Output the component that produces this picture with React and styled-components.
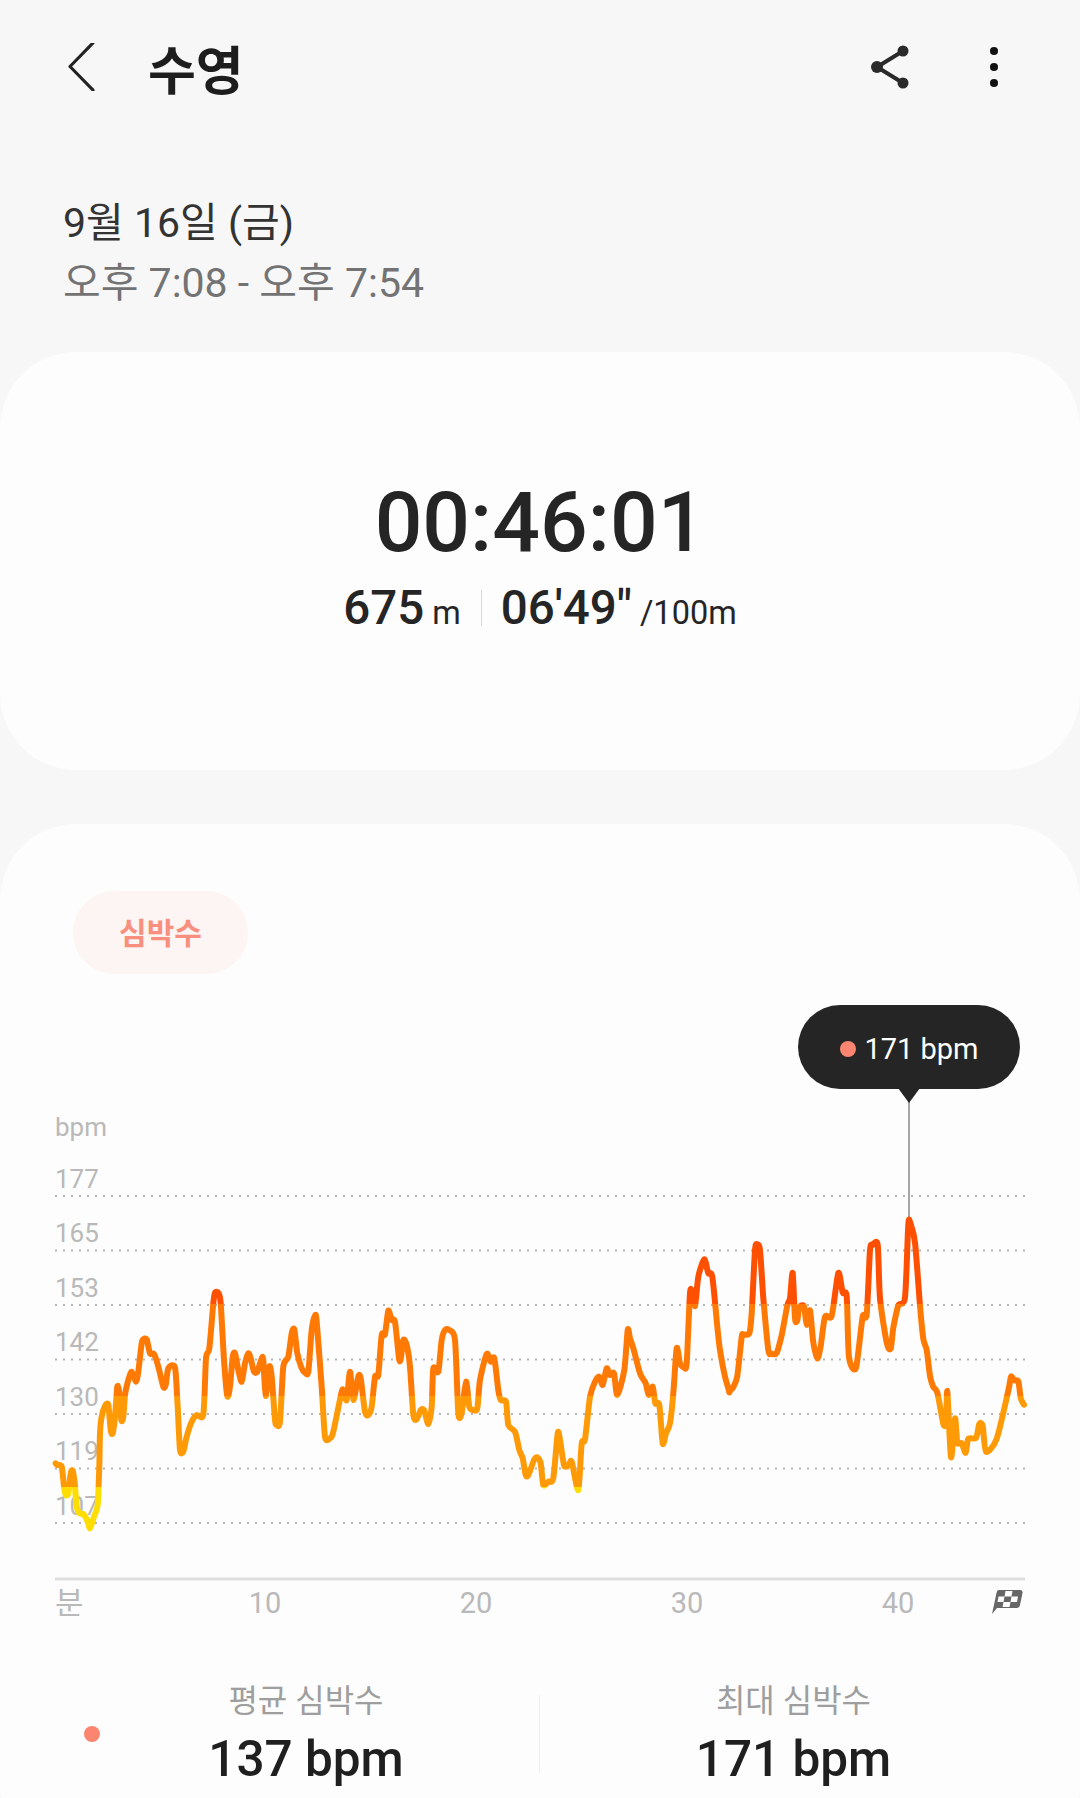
import React from "react";
import styled, { createGlobalStyle } from "styled-components";

const GlobalStyle = createGlobalStyle`
  html, body {
    margin: 0;
    padding: 0;
    background: #f7f7f7;
  }
  body {
    font-family: Roboto, "Noto Sans CJK KR", sans-serif;
  }
`;

const Page = styled.div`
  width: 1080px;
  height: 1798px;
  overflow: hidden;
  background: #f7f7f7;
`;

const Header = styled.header`
  display: flex;
  align-items: center;
  height: 134px;
  padding: 0 62px 0 64px;
`;

const HeaderIcon = styled.svg`
  display: block;
  width: 48px;
  height: 48px;
  flex: none;
`;

const Title = styled.h1`
  margin: 0 0 0 36px;
  flex: 1;
  font-size: 52px;
  font-weight: 700;
  color: #1d1d1d;
`;

const Actions = styled.div`
  display: flex;
  gap: 56px;
`;

const DateBlock = styled.div`
  height: 218px;
  padding: 59px 0 0 63px;
  box-sizing: border-box;
`;

const DateLine = styled.div`
  font-size: 41px;
  line-height: 60px;
  color: ${(p) => (p.$muted ? "#737373" : "#333")};
`;

const Card = styled.section`
  background: #fdfdfd;
  border-radius: 76px;
`;

const SummaryCard = styled(Card)`
  height: 418px;
  padding-top: 126px;
  box-sizing: border-box;
  display: flex;
  flex-direction: column;
  align-items: center;
`;

const Timer = styled.div`
  font-size: 84px;
  line-height: 90px;
  font-weight: 500;
  color: #252525;
`;

const Metrics = styled.div`
  display: flex;
  align-items: baseline;
  margin-top: 12px;
  color: #252525;
`;

const MetricValue = styled.span`
  font-size: 47.5px;
  font-weight: 500;
`;

const MetricUnit = styled.span`
  margin-left: 8px;
  font-size: 32.5px;
`;

const MetricDivider = styled.span`
  width: 1px;
  height: 36px;
  margin: 0 19px 0 20px;
  background: #d8d8d8;
  align-self: center;
`;

const ChartCard = styled(Card)`
  height: 1040px;
  margin-top: 54px;
  padding-top: 67px;
  box-sizing: border-box;
`;

const Pill = styled.div`
  display: flex;
  align-items: center;
  justify-content: center;
  width: 175px;
  height: 83px;
  padding-bottom: 4px;
  box-sizing: border-box;
  margin-left: 73px;
  border-radius: 42px;
  background: #fdf5f3;
  color: #f98f7e;
  font-size: 30px;
  font-weight: 700;
`;

const ChartWrap = styled.div`
  position: relative;
  margin-top: 16px;
  height: 650px;
`;

const ChartSvg = styled.svg`
  display: block;
  width: 1080px;
  height: 650px;
`;

const Tooltip = styled.div`
  position: absolute;
  left: 798px;
  top: 15px;
  width: 222px;
  height: 84px;
  padding: 3px 0 0 1px;
  box-sizing: border-box;
  border-radius: 42px;
  background: #252525;
  color: #fff;
  font-size: 29px;
  display: flex;
  align-items: center;
  justify-content: center;
  gap: 8px;

  &::after {
    content: "";
    position: absolute;
    left: 100px;
    top: 83px;
    border-left: 11px solid transparent;
    border-right: 11px solid transparent;
    border-top: 15px solid #252525;
  }
`;

const Dot = styled.span`
  display: block;
  width: 16px;
  height: 16px;
  border-radius: 50%;
  background: #fb8571;
`;

const Stats = styled.div`
  display: grid;
  grid-template-columns: 466px 1px 507px;
  align-items: center;
  margin: 39px 0 0 73px;
`;

const StatCell = styled.div`
  display: grid;
  grid-template-columns: 38px 1fr 38px;
  align-items: center;
  justify-items: center;
  height: 110px;
`;

const StatDivider = styled.div`
  height: 78px;
  background: #efefef;
`;

const StatText = styled.div`
  grid-column: 2;
  text-align: center;
`;

const StatLabel = styled.div`
  font-size: 32px;
  line-height: 40px;
  color: #9e9e9e;
`;

const StatValue = styled.div`
  margin-top: 10px;
  font-size: 49.5px;
  line-height: 56px;
  font-weight: 500;
  color: #1f1f1f;
`;

// traced from crops of the chart, each with its own scale
const fromLeft = ([x, y]) => [x / 3, 1100 + y / 3];
const fromMiddle = ([x, y]) => [380 + x / 3, 1100 + y / 3];
const fromRight = ([x, y]) => [700 + x / 3, 980 + y / 2.703];

const leftPoints = [
  [167, 1090], [172, 1095], [185, 1100], [192, 1160], [197, 1185], [205, 1180], [212, 1120], [218, 1112],
  [224, 1150], [230, 1220], [238, 1240], [250, 1242], [262, 1262], [270, 1285], [282, 1250], [293, 1215],
  [298, 1100], [300, 1000], [305, 950], [315, 918], [325, 915], [332, 990], [338, 1000], [345, 950],
  [352, 860], [358, 880], [364, 960], [370, 950], [375, 885], [385, 840], [395, 815], [408, 845],
  [415, 815], [425, 730], [430, 718], [440, 718], [450, 760], [462, 762], [475, 800], [490, 860],
  [497, 855], [505, 805], [525, 803], [533, 920], [540, 1050], [550, 1055], [560, 1010], [575, 965],
  [590, 945], [610, 943], [618, 775], [628, 745], [640, 610], [645, 578], [655, 578], [662, 610],
  [672, 780], [682, 888], [690, 860], [698, 770], [705, 760], [715, 810], [725, 845], [735, 790],
  [745, 760], [752, 775], [762, 815], [772, 815], [785, 775], [790, 780], [797, 888], [808, 800],
  [815, 830], [825, 960], [830, 975], [840, 965], [850, 800], [865, 770], [875, 700], [883, 688],
  [892, 760], [905, 805], [915, 818], [925, 815], [935, 690], [945, 647], [950, 665], [965, 860],
  [975, 1010], [990, 1015], [1000, 995], [1025, 875], [1030, 875], [1040, 900], [1050, 815], [1060, 900],
  [1075, 830], [1082, 835], [1095, 935], [1105, 945], [1115, 920], [1125, 830], [1135, 825], [1145, 705],
  [1155, 703], [1165, 632], [1175, 660], [1185, 665], [1197, 775],
];

const middlePoints = [
  [62, 778], [70, 720], [80, 735], [90, 800], [100, 945], [110, 958], [122, 930], [132, 930],
  [145, 972], [155, 920], [160, 805], [175, 815], [185, 720], [195, 690], [208, 690], [225, 720],
  [235, 940], [245, 938], [258, 845], [268, 920], [280, 930], [292, 925], [300, 840], [320, 762],
  [332, 785], [343, 775], [355, 870], [362, 900], [378, 905], [385, 975], [405, 995], [418, 1050],
  [428, 1075], [437, 1125], [445, 1125], [462, 1080], [472, 1072], [482, 1090], [490, 1155], [505, 1145],
  [520, 1135], [533, 1000], [540, 1020], [552, 1095], [565, 1097], [575, 1085], [595, 1170], [605, 1030],
  [615, 1018], [630, 890], [645, 845], [658, 830], [668, 855], [680, 805], [690, 825], [702, 820],
  [712, 885], [733, 810], [743, 690], [750, 715], [760, 745], [780, 820], [797, 850], [806, 885],
  [818, 860], [826, 910], [838, 915], [848, 1030], [858, 1000], [870, 970], [880, 880], [890, 745],
  [900, 790], [912, 802], [920, 790], [930, 580], [937, 578], [945, 618], [955, 530], [973, 478],
  [985, 520], [997, 530], [1012, 680], [1020, 750], [1035, 830], [1048, 875],
];

const rightPoints = [
  [88, 1112], [100, 1100], [112, 1070], [125, 965], [130, 958], [148, 955], [155, 900], [165, 730],
  [172, 715], [180, 730], [190, 860], [205, 1000], [215, 1010], [230, 1008], [245, 960], [262, 880],
  [270, 860], [278, 792], [285, 915], [292, 920], [298, 885], [312, 882], [320, 932], [330, 893],
  [340, 980], [352, 1023], [362, 990], [375, 910], [395, 908], [415, 792], [428, 845], [440, 855],
  [447, 1020], [468, 1048], [488, 910], [500, 905], [510, 730], [518, 716], [533, 716], [540, 860],
  [560, 980], [572, 997], [580, 940], [595, 880], [615, 858], [625, 660], [632, 660], [645, 710],
  [660, 880], [670, 970], [680, 1000], [690, 1070], [700, 1100], [712, 1115], [730, 1200], [738, 1195],
  [742, 1112], [753, 1290], [765, 1185], [772, 1250], [785, 1252], [797, 1278], [805, 1240], [828, 1238],
  [838, 1200], [848, 1205], [858, 1275], [890, 1240], [925, 1110], [933, 1072], [942, 1082], [955, 1085],
  [962, 1130], [972, 1148],
];

const points = [
  ...leftPoints.map(fromLeft),
  ...middlePoints.map(fromMiddle),
  ...rightPoints.map(fromRight),
];

function smoothPath(pts) {
  let d = `M${pts[0][0]} ${pts[0][1]}`;
  for (let i = 0; i < pts.length - 1; i++) {
    const p0 = pts[i - 1] || pts[i];
    const p1 = pts[i];
    const p2 = pts[i + 1];
    const p3 = pts[i + 2] || p2;
    const c1x = p1[0] + (p2[0] - p0[0]) / 8;
    const c1y = p1[1] + (p2[1] - p0[1]) / 8;
    const c2x = p2[0] - (p3[0] - p1[0]) / 8;
    const c2y = p2[1] - (p3[1] - p1[1]) / 8;
    d += `C${c1x.toFixed(1)} ${c1y.toFixed(1)} ${c2x.toFixed(1)} ${c2y.toFixed(1)} ${p2[0].toFixed(1)} ${p2[1].toFixed(1)}`;
  }
  return d;
}

const gridLines = [
  { y: 1196, label: "177" },
  { y: 1250.6, label: "165" },
  { y: 1305, label: "153" },
  { y: 1359.6, label: "142" },
  { y: 1414, label: "130" },
  { y: 1468.6, label: "119" },
  { y: 1523, label: "107" },
];

const xLabels = [
  { x: 265, label: "10" },
  { x: 476, label: "20" },
  { x: 687, label: "30" },
  { x: 898, label: "40" },
];

function Chart() {
  return (
    <ChartSvg viewBox="0 990 1080 650">
      <defs>
        <linearGradient id="hr" gradientUnits="userSpaceOnUse" x1="0" y1="1200" x2="0" y2="1540">
          <stop offset="0.306" stopColor="#ff4f00" />
          <stop offset="0.306" stopColor="#ff7a05" />
          <stop offset="0.576" stopColor="#ff7a05" />
          <stop offset="0.576" stopColor="#ff9a07" />
          <stop offset="0.844" stopColor="#ff9a07" />
          <stop offset="0.844" stopColor="#ffdd00" />
        </linearGradient>
      </defs>
      <text x="55" y="1136" fontSize="26" fill="#b9b9b9">bpm</text>
      {gridLines.map((g) => (
        <g key={g.label}>
          <text x="55" y={g.y - 8.5} fontSize="26" fill="#b9b9b9">{g.label}</text>
          <line
            x1="55"
            x2="1025"
            y1={g.y}
            y2={g.y}
            stroke="#b5b5b5"
            strokeWidth="2"
            strokeDasharray="2 6"
          />
        </g>
      ))}
      <line x1="909" x2="909" y1="1100" y2="1222" stroke="#888" strokeWidth="1.5" />
      <path
        d={smoothPath(points)}
        fill="none"
        stroke="url(#hr)"
        strokeWidth="6"
        strokeLinejoin="round"
        strokeLinecap="round"
      />
      <line x1="55" x2="1025" y1="1579" y2="1579" stroke="#dedede" strokeWidth="3" />
      <text x="55" y="1614" fontSize="31" fill="#b9b9b9">분</text>
      {xLabels.map((l) => (
        <text key={l.label} x={l.x} y="1613" fontSize="29" fill="#b9b9b9" textAnchor="middle">{l.label}</text>
      ))}
      <g transform="translate(992 1588)">
        <path d="M7 2 H28 Q31 2 30.5 5 L28 17 Q27.5 20 24.5 20 H5 L0 26 L4.5 5 Q5 2 7 2 Z" fill="#666" />
        <path d="M13.5 3 H20.5 L19.5 8.5 H12.5 Z M6.5 8.5 H12.5 L11.5 14 H5.5 Z M19.5 8.5 H26 L25 14 H18.5 Z M11.5 14 H18.5 L17.5 19 H10.5 Z" fill="#fdfdfd" />
      </g>
    </ChartSvg>
  );
}

export default function App() {
  return (
    <Page>
      <GlobalStyle />
      <Header>
        <HeaderIcon viewBox="0 0 48 48">
          <path d="M29 3 L6 26.5 L29 50" transform="translate(0 -3)" fill="none" stroke="#222" strokeWidth="3.2" strokeLinecap="round" strokeLinejoin="round" />
        </HeaderIcon>
        <Title>수영</Title>
        <Actions>
          <HeaderIcon viewBox="0 0 48 48">
            <path d="M37 8 L11 24 L37 40" fill="none" stroke="#2a2a2a" strokeWidth="4" />
            <circle cx="37" cy="8" r="5.5" fill="#2a2a2a" />
            <circle cx="11" cy="24" r="6" fill="#2a2a2a" />
            <circle cx="37" cy="40" r="5.5" fill="#2a2a2a" />
          </HeaderIcon>
          <HeaderIcon viewBox="0 0 48 48">
            <circle cx="24" cy="8" r="4" fill="#111" />
            <circle cx="24" cy="24" r="4" fill="#111" />
            <circle cx="24" cy="40" r="4" fill="#111" />
          </HeaderIcon>
        </Actions>
      </Header>
      <DateBlock>
        <DateLine>9월 16일 (금)</DateLine>
        <DateLine $muted>오후 7:08 - 오후 7:54</DateLine>
      </DateBlock>
      <SummaryCard>
        <Timer>00:46:01</Timer>
        <Metrics>
          <MetricValue>675</MetricValue>
          <MetricUnit>m</MetricUnit>
          <MetricDivider />
          <MetricValue>06'49"</MetricValue>
          <MetricUnit>/100m</MetricUnit>
        </Metrics>
      </SummaryCard>
      <ChartCard>
        <Pill>심박수</Pill>
        <ChartWrap>
          <Chart />
          <Tooltip>
            <Dot />
            171 bpm
          </Tooltip>
        </ChartWrap>
        <Stats>
          <StatCell>
            <Dot />
            <StatText>
              <StatLabel>평균 심박수</StatLabel>
              <StatValue>137 bpm</StatValue>
            </StatText>
          </StatCell>
          <StatDivider />
          <StatCell>
            <StatText>
              <StatLabel>최대 심박수</StatLabel>
              <StatValue>171 bpm</StatValue>
            </StatText>
          </StatCell>
        </Stats>
      </ChartCard>
    </Page>
  );
}
